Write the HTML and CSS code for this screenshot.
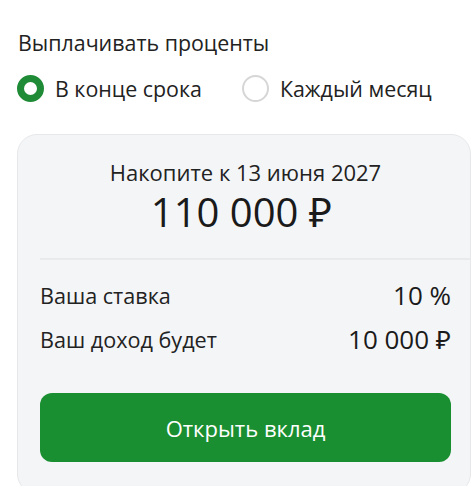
FILE: index.html
```html
<!DOCTYPE html>
<html lang="ru">
<head>
<meta charset="utf-8">
<link rel="stylesheet" href="styles.css">
</head>
<body>
<div class="page">
  <div class="title">Выплачивать проценты</div>
  <div class="options">
    <label class="option">
      <span class="radio radio-on"></span>
      <span>В конце срока</span>
    </label>
    <label class="option">
      <span class="radio"></span>
      <span>Каждый месяц</span>
    </label>
  </div>
  <div class="card">
    <div class="until">Накопите к 13 июня 2027</div>
    <div class="total">110 000 ₽</div>
    <div class="divider"></div>
    <div class="rows">
      <div class="row">
        <span class="label">Ваша ставка</span>
        <span class="value">10 %</span>
      </div>
      <div class="row">
        <span class="label">Ваш доход будет</span>
        <span class="value">10 000 ₽</span>
      </div>
    </div>
    <button class="btn">Открыть вклад</button>
  </div>
</div>
</body>
</html>
```
FILE: styles.css
```css
* { box-sizing: border-box; }
html, body { margin: 0; padding: 0; background: #ffffff; }
body {
  font-family: "Open Sans", "Noto Sans", sans-serif;
  color: #1f1f1f;
  overflow: hidden;
  height: 486px;
}
.page {
  padding-top: 29px;
}
.title {
  margin-left: 18px;
  font-size: 21.4px;
  line-height: 28px;
  color: #222;
}
.options {
  display: flex;
  align-items: center;
  margin-top: 17px;
  margin-left: 17px;
  gap: 40px;
  height: 28px;
}
.option {
  display: flex;
  align-items: center;
  gap: 11px;
  font-size: 21.4px;
  color: #222;
}
.radio {
  width: 27px;
  height: 27px;
  border-radius: 50%;
  border: 2px solid #d6d6d6;
  background: #fff;
}
.radio-on {
  border: 7px solid #1f8b36;
}
.card {
  margin-top: 32px;
  margin-left: 17px;
  width: 454px;
  height: 360px;
  background: #f4f5f7;
  border: 1px solid #e7e8ea;
  border-radius: 20px;
  padding: 23px 19px 0 22px;
  display: flex;
  flex-direction: column;
}
.until {
  text-align: center;
  font-size: 22px;
  line-height: 28px;
  color: #222;
}
.total {
  text-align: center;
  font-size: 40px;
  line-height: 50px;
  margin-top: 1px;
  padding-right: 8px;
  color: #1a1a1a;
}
.divider {
  margin-top: 21px;
  height: 2px;
  background: #e9eaec;
  margin-right: -19px;
}
.rows {
  margin-top: 13px;
  display: flex;
  flex-direction: column;
}
.row {
  display: flex;
  justify-content: space-between;
  align-items: center;
  height: 44px;
}
.label {
  font-size: 21.6px;
  color: #222;
}
.value {
  font-size: 26px;
  color: #1a1a1a;
}
.btn {
  margin-top: 32px;
  height: 69px;
  border: none;
  border-radius: 12px;
  background: #1a8f31;
  color: #ffffff;
  font-family: inherit;
  font-size: 22px;
}
```
